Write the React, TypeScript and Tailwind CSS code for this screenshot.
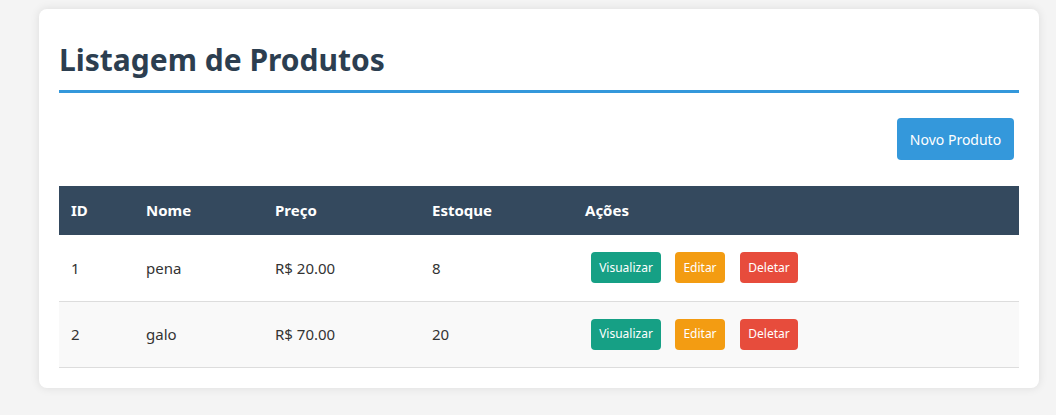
const produtos = [
  { id: 1, nome: "pena", preco: "R$ 20.00", estoque: 8 },
  { id: 2, nome: "galo", preco: "R$ 70.00", estoque: 20 },
];

export default function App() {
  return (
    <div className="min-h-[415px] bg-[#f4f4f4] pt-[9px] font-['Noto_Sans',sans-serif] text-[#333]">
      <div className="ml-[39px] w-[1000px] rounded-lg bg-white px-5 pt-[32px] pb-5 shadow-[0_0_10px_rgba(0,0,0,0.1)]">
        <h1 className="border-b-[3px] border-[#3498db] pb-[11px] text-[30px] font-bold leading-[38px] text-[#2c3e50]">
          Listagem de Produtos
        </h1>

        <div className="mt-[25px] flex justify-end pr-[5px]">
          <button className="h-[42px] w-[117px] rounded bg-[#3498db] text-[14px] text-white">
            Novo Produto
          </button>
        </div>

        <table className="mt-[26px] w-full border-collapse text-left text-[15px]">
          <thead>
            <tr className="h-[49px] bg-[#34495e] text-white">
              <th className="w-[75px] px-3 font-bold">ID</th>
              <th className="w-[129px] px-3 font-bold">Nome</th>
              <th className="w-[157px] px-3 font-bold">Preço</th>
              <th className="w-[153px] px-3 font-bold">Estoque</th>
              <th className="px-3 font-bold">Ações</th>
            </tr>
          </thead>
          <tbody>
            {produtos.map((p, i) => (
              <tr
                key={p.id}
                className={`h-[66px] border-b border-[#ddd] ${i % 2 === 1 ? "bg-[#f9f9f9]" : "bg-white"}`}
              >
                <td className="px-3">{p.id}</td>
                <td className="px-3">{p.nome}</td>
                <td className="px-3">{p.preco}</td>
                <td className="px-3">{p.estoque}</td>
                <td className="px-3">
                  <div className="flex pl-[6px]">
                    <button className="h-[31px] w-[70px] rounded bg-[#16a085] text-[12px] text-white">
                      Visualizar
                    </button>
                    <button className="ml-[14px] h-[31px] w-[50px] rounded bg-[#f39c12] text-[12px] text-white">
                      Editar
                    </button>
                    <button className="ml-[15px] h-[31px] w-[58px] rounded bg-[#e74c3c] text-[12px] text-white">
                      Deletar
                    </button>
                  </div>
                </td>
              </tr>
            ))}
          </tbody>
        </table>
      </div>
    </div>
  );
}
